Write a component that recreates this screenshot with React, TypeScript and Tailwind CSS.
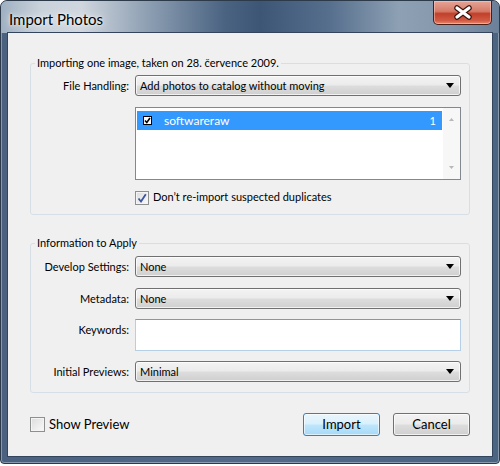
import React from "react";

const font = "font-['Lato',sans-serif]";

function Select({ value }: { value: string }) {
  return (
    <div className="flex h-[21px] items-center justify-between rounded-[3px] border border-[#707070] bg-[linear-gradient(#f3f3f3_0%,#ebebeb_48%,#dddddd_52%,#cfcfcf_100%)] pl-[4px] pr-[6px] shadow-[inset_0_0_0_1px_rgba(255,255,255,0.7)]">
      <span className="leading-[19px]">{value}</span>
      <svg width="8" height="5" viewBox="0 0 8 5">
        <path d="M0 0h8L4 5z" fill="#000" />
      </svg>
    </div>
  );
}

function CheckBox({ checked, size = 14 }: { checked?: boolean; size?: number }) {
  return (
    <span
      className="flex shrink-0 items-center justify-center border border-[#8e8f8f] bg-[linear-gradient(135deg,#dcdcdc,#fafafa)] shadow-[inset_0_0_0_1px_#f4f4f4]"
      style={{ width: size, height: size }}
    >
      {checked && (
        <svg width="10" height="10" viewBox="0 0 10 10">
          <path d="M1.5 5.5 L4 8.5 L8.8 1.2" fill="none" stroke="#3b55a0" strokeWidth="1.8" />
        </svg>
      )}
    </span>
  );
}

function ListBox() {
  return (
    <div className="mt-[11px] flex h-[73px] border border-[#828790] bg-white">
      <div className="flex-1 px-[1px] pt-[3px]">
        <div className="flex h-[19px] items-center bg-[#3399ff] pl-[6px] pr-[6px] text-white">
          <svg width="9" height="9" viewBox="0 0 9 9" className="shrink-0">
            <rect x="0.5" y="0.5" width="8" height="8" fill="#fff" stroke="#000" />
            <path d="M2 4.5 L3.8 6.5 L7 2" fill="none" stroke="#000" strokeWidth="1.6" />
          </svg>
          <span className="ml-[12px] flex-1 text-[12px] leading-[19px]">softwareraw</span>
          <span className="leading-[19px]">1</span>
        </div>
      </div>
      <div className="flex w-[17px] flex-col justify-between bg-[#f7f7f7] py-[9px]">
        <svg width="17" height="4" viewBox="0 0 17 4">
          <path d="M6 4h5L8.5 1z" fill="#b8b8b8" />
        </svg>
        <svg width="17" height="4" viewBox="0 0 17 4">
          <path d="M6 0h5L8.5 3z" fill="#b8b8b8" />
        </svg>
      </div>
    </div>
  );
}

export default function App() {
  return (
    <div className={`h-[466px] w-[500px] bg-white text-[11px] text-black ${font}`}>
      <div className="flex h-[464px] w-[500px] flex-col overflow-hidden rounded-t-[7px] rounded-b-[4px] border border-[#2c3a4a] bg-[linear-gradient(90deg,#4a6280,#52698a_50%,#4b6482)] shadow-[inset_0_0_0_1px_rgba(255,255,255,0.35)]">
        <div className="flex h-[32px] shrink-0 items-start justify-between bg-[linear-gradient(90deg,#9fb0c2_0%,#c9d2db_8%,#cfd6de_16%,#8b9db1_30%,#4a6381_45%,#3e5676_52%,#566f8d_66%,#8ea1b4_80%,#8396ab_90%,#6b8099_100%)] pl-[8px] pr-[7px]">
          <span className="mt-[8px] text-[15px] leading-[20px] [text-shadow:0_0_8px_rgba(255,255,255,0.95),0_0_3px_rgba(255,255,255,0.9)]">
            Import Photos
          </span>
          <div className="flex h-[24px] w-[59px] items-center justify-center rounded-b-[5px] border border-t-0 border-[#4a1f17] bg-[linear-gradient(#e6a596_0%,#d67a68_45%,#c0402b_55%,#d25a44_85%,#e68a6e_100%)] shadow-[inset_0_0_0_1px_rgba(255,210,200,0.5)]">
            <svg width="22" height="15" viewBox="0 0 22 15">
              <path d="M5 3 L17 12 M17 3 L5 12" stroke="#3a1710" strokeWidth="5.5" strokeLinecap="round" />
              <path d="M5 3 L17 12 M17 3 L5 12" stroke="#fff" strokeWidth="3.2" strokeLinecap="round" />
            </svg>
          </div>
        </div>

        <div className="mx-[7px] flex h-[423px] shrink-0 flex-col bg-[#f0f0f0] shadow-[0_0_0_1px_#33455c]">
          <fieldset className="mx-[22px] mt-[22px] rounded-[3px] border border-[#d5dfe5] px-[4px] pb-[9px] pt-[4px]">
            <legend className="px-[2px] leading-[16px]">Importing one image, taken on 28. července 2009.</legend>
            <div className="grid grid-cols-[94px_326px] gap-x-[6px] whitespace-nowrap">
              <span className="text-right leading-[21px]">File Handling:</span>
              <Select value="Add photos to catalog without moving" />
              <div />
              <ListBox />
              <div />
              <div className="mt-[10px] flex h-[15px] items-center gap-[4px]">
                <CheckBox checked />
                <span>Don’t re-import suspected duplicates</span>
              </div>
            </div>
          </fieldset>

          <fieldset className="mx-[22px] mt-[20px] rounded-[3px] border border-[#d5dfe5] px-[4px] pb-[10px] pt-[5px]">
            <legend className="px-[2px] leading-[16px]">Information to Apply</legend>
            <div className="grid grid-cols-[94px_326px] gap-x-[6px] whitespace-nowrap">
              <span className="text-right leading-[21px]">Develop Settings:</span>
              <Select value="None" />
              <span className="mt-[11px] text-right leading-[21px]">Metadata:</span>
              <div className="mt-[11px]">
                <Select value="None" />
              </div>
              <span className="mt-[10px] text-right leading-[21px]">Keywords:</span>
              <div className="mt-[10px] h-[32px] border border-[#b5cfe7] border-t-[#6a9fd4] bg-white" />
              <span className="mt-[10px] text-right leading-[21px]">Initial Previews:</span>
              <div className="mt-[10px]">
                <Select value="Minimal" />
              </div>
            </div>
          </fieldset>

          <div className="mt-[20px] flex items-center justify-between pl-[22px] pr-[22px] text-[13px]">
            <div className="flex items-center gap-[4px]">
              <CheckBox size={15} />
              <span>Show Preview</span>
            </div>
            <div className="flex gap-[13px]">
              <button className="h-[23px] w-[77px] rounded-[3px] border border-[#3c7fb1] bg-[linear-gradient(#eaf6fd_0%,#d9f0fc_48%,#bee6fd_52%,#a7d9f5_100%)] shadow-[inset_0_0_0_1px_rgba(255,255,255,0.6)]">
                Import
              </button>
              <button className="h-[23px] w-[77px] rounded-[3px] border border-[#707070] bg-[linear-gradient(#f2f2f2_0%,#ebebeb_48%,#dddddd_52%,#cfcfcf_100%)] shadow-[inset_0_0_0_1px_rgba(255,255,255,0.7)]">
                Cancel
              </button>
            </div>
          </div>
        </div>
      </div>
    </div>
  );
}
